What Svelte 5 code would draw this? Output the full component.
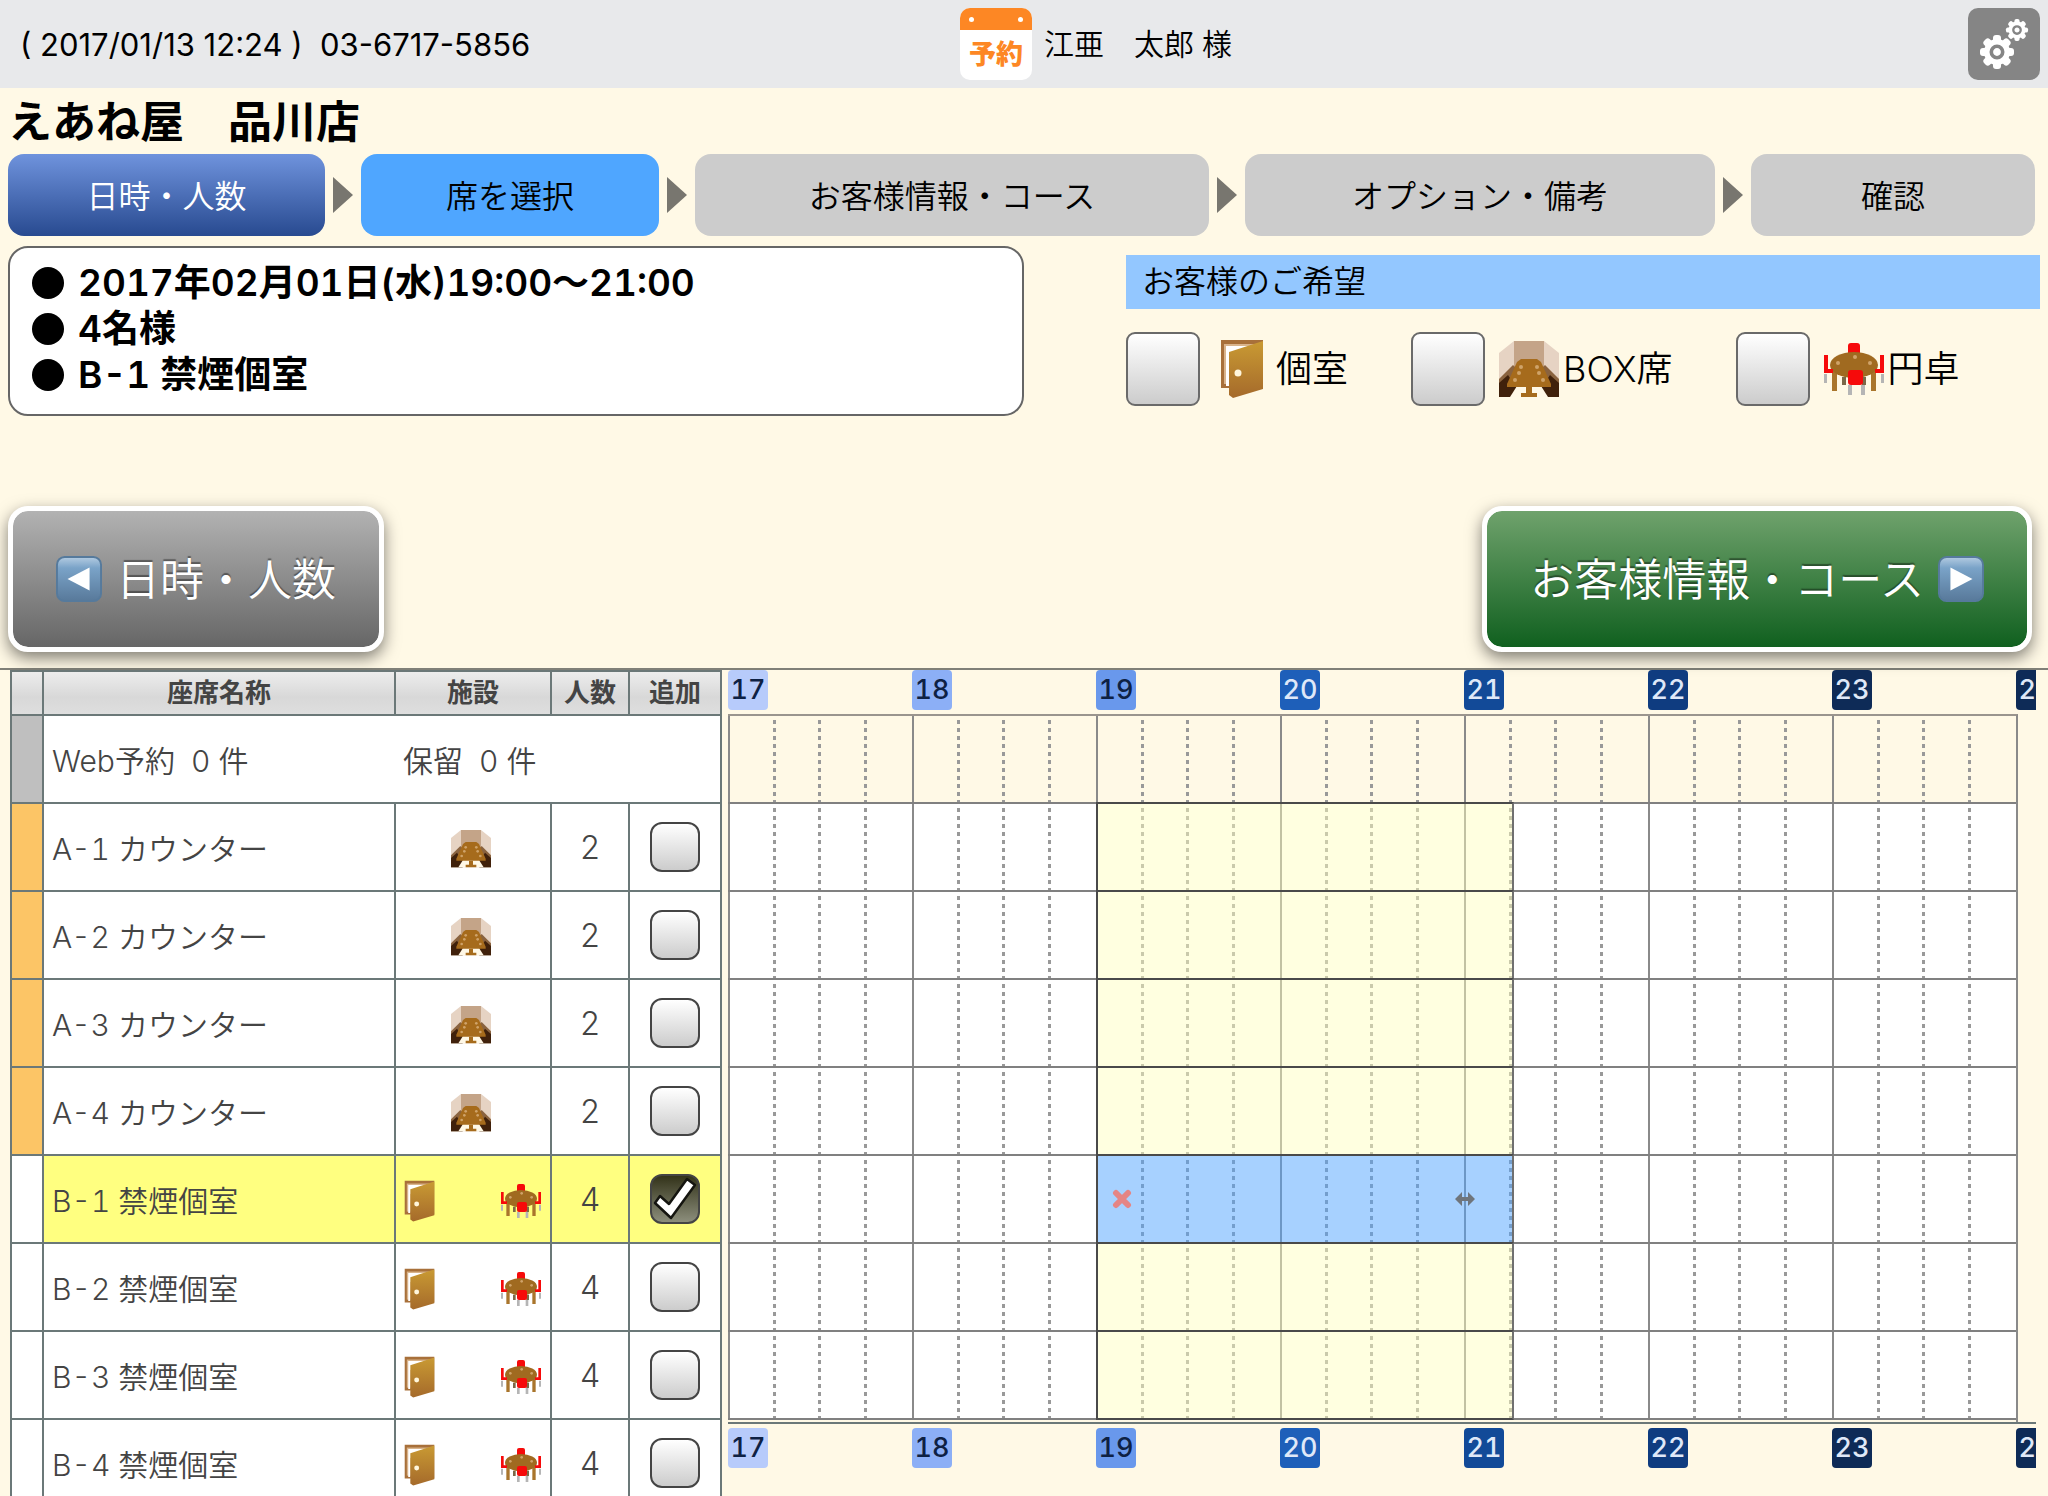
<script>
  const steps = [
    { label: '日時・人数', grow: 317, state: 'done' },
    { label: '席を選択', grow: 298, state: 'current' },
    { label: 'お客様情報・コース', grow: 514, state: 'todo' },
    { label: 'オプション・備考', grow: 470, state: 'todo' },
    { label: '確認', grow: 284, state: 'todo' }
  ];

  const summary = ['2017年02月01日(水)19:00〜21:00', '4名様', 'B-1 禁煙個室'];

  const wishes = [
    { id: 'room', label: '個室', icon: 'door' },
    { id: 'box', label: 'BOX席', icon: 'box' },
    { id: 'round', label: '円卓', icon: 'round' }
  ];

  const seats = [
    ...[1, 2, 3, 4].map((n) => ({
      id: `A-${n}`, name: `A-${n} カウンター`, zone: 'counter', icons: ['box'], size: 2, added: false
    })),
    ...[1, 2, 3, 4].map((n) => ({
      id: `B-${n}`, name: `B-${n} 禁煙個室`, zone: 'private', icons: ['door', 'round'], size: 4, added: n === 1
    }))
  ];

  const plotted = seats.slice(0, 7);
  const hours = [17, 18, 19, 20, 21, 22, 23, 24];
  const slots = hours.slice(0, 7);
  const teeth = [0, 45, 90, 135, 180, 225, 270, 315];

  const startHour = 17;
  const span = { from: 19, to: 21.27 };
  const left = ((span.from - startHour) / slots.length) * 100;
  const width = ((span.to - span.from) / slots.length) * 100;
</script>

{#snippet facility(kind)}
  {#if kind === 'door'}
    <svg class="ico door" viewBox="0 0 44 60" aria-hidden="true">
      <defs>
        <linearGradient id="doorFill" x1="0" y1="0" x2="0" y2="1">
          <stop offset="0" stop-color="#c99a33" />
          <stop offset="1" stop-color="#a56a2b" />
        </linearGradient>
      </defs>
      <path d="M1 1h42v48H1z" fill="#a8703a" />
      <path d="M4 5h36v40H4z" fill="#d9b48c" />
      <path d="M6 7h33v6L9 20v27H6z" fill="#fff" />
      <path d="M9 13L43 2v48L13 59 9 56z" fill="url(#doorFill)" />
      <circle cx="18" cy="34" r="3.5" fill="#fff6dc" />
    </svg>
  {:else if kind === 'box'}
    <svg class="ico box" viewBox="0 0 60 56" aria-hidden="true">
      <path d="M0 12L15 0h30l15 12v44H0z" fill="#e6d3c3" />
      <path d="M15 0h30v27H15z" fill="#c4a488" />
      <path d="M0 38L14 24l4 4v28H0z" fill="#8a633f" />
      <path d="M60 38L46 24l-4 4v28h18z" fill="#8a633f" />
      <path d="M0 42l9-8 8 12v10H0z" fill="#40210b" />
      <path d="M60 42l-9-8-8 12v10h17z" fill="#40210b" />
      <path d="M11 56l7-11h24l7 11z" fill="#fff8e6" />
      <path d="M22 18h16l4 3 10 22v3H8v-3l10-22z" fill="#a66b1c" />
      <path d="M27 46h6v6h5v4H22v-4h5z" fill="#a66b1c" />
      <g fill="#cfa36a">
        <circle cx="22" cy="26" r="2" /><circle cx="38" cy="26" r="2" />
        <circle cx="20" cy="32" r="2" /><circle cx="40" cy="32" r="2" />
        <circle cx="16" cy="39" r="2" /><circle cx="44" cy="39" r="2" />
      </g>
    </svg>
  {:else}
    <svg class="ico round" viewBox="0 0 60 52" aria-hidden="true">
      <path d="M0 31h3v9H0zM57 31h3v9h-3zM24 42h4v10h-4zM37 42h4v10h-4z" fill="#b5b5b5" />
      <path d="M8 28h5v20H8zM47 28h5v20h-5z" fill="#a9752c" />
      <path d="M18 34h4v8h-4zM38 34h4v8h-4z" fill="#7b6848" />
      <rect x="24" y="0" width="12" height="14" rx="3" fill="#f60a0a" />
      <ellipse cx="30" cy="22" rx="24" ry="13" fill="#a06a20" />
      <path d="M0 12h4v14h5v4H0zM60 12h-4v14h-5v4h9z" fill="#f60a0a" />
      <g fill="#cfa36a">
        <circle cx="31" cy="14" r="2" /><circle cx="14" cy="20" r="2" /><circle cx="46" cy="20" r="2" />
      </g>
      <rect x="24" y="27" width="15" height="15" rx="3" fill="#f60a0a" />
    </svg>
  {/if}
{/snippet}

{#snippet gear(cx, cy, scale)}
  <g transform="translate({cx} {cy}) scale({scale})">
    {#each teeth as a}
      <rect x="-4" y="-17" width="8" height="12" rx="3" transform="rotate({a})" fill="#fff" />
    {/each}
    <circle r="13" fill="#fff" />
    <circle r="5.7" fill="none" stroke="#858585" stroke-width="3.6" />
  </g>
{/snippet}

{#snippet arrowBadge(dir)}
  <svg class="badge" viewBox="0 0 48 48" aria-hidden="true">
    <defs>
      <linearGradient id="badge-{dir}" x1="0" y1="0" x2="0" y2="1">
        <stop offset="0" stop-color="#b4cce2" />
        <stop offset="0.25" stop-color="#7aa3c8" />
        <stop offset="1" stop-color="#58799a" />
      </linearGradient>
    </defs>
    <rect x="1" y="1" width="46" height="46" rx="8" fill="url(#badge-{dir})" stroke="#567a9c" stroke-width="2" />
    <path d={dir === 'prev' ? 'M35 12v24L12 24z' : 'M13 12v24l23-12z'} fill="#fff" />
  </svg>
{/snippet}

{#snippet hourScale()}
  <div class="scale">
    {#each hours as h}
      <span class="hour h{h}">{h}</span>
    {/each}
  </div>
{/snippet}

<div class="page">
  <header class="top">
    <p class="call">( 2017/01/13 12:24 )&nbsp; 03-6717-5856</p>
    <div class="guest">
      <span class="calendar"><span class="rings"></span><b>予約</b></span>
      <span class="guest-name">江亜　太郎 様</span>
      <button class="settings" aria-label="設定">
        <svg viewBox="0 0 72 72" aria-hidden="true">
          {@render gear(29, 44, 1)}
          {@render gear(49, 22, 0.65)}
        </svg>
      </button>
    </div>
  </header>

  <h1>えあね屋　品川店</h1>

  <nav class="steps">
    {#each steps as step, i}
      {#if i > 0}<span class="sep"></span>{/if}
      <button class="step {step.state}" style="flex-grow: {step.grow}">{step.label}</button>
    {/each}
  </nav>

  <section class="overview">
    <ul class="summary">
      {#each summary as line}
        <li>{line}</li>
      {/each}
    </ul>
    <div class="wish">
      <h2>お客様のご希望</h2>
      <div class="wish-list">
        {#each wishes as w}
          <div class="wish-item {w.id}">
            <input type="checkbox" id="wish-{w.id}" />
            <label for="wish-{w.id}">{@render facility(w.icon)}<span>{w.label}</span></label>
          </div>
        {/each}
      </div>
    </div>
  </section>

  <div class="actions">
    <button class="go prev">{@render arrowBadge('prev')}<span>日時・人数</span></button>
    <button class="go next"><span>お客様情報・コース</span>{@render arrowBadge('next')}</button>
  </div>

  <main class="board">
    <table>
      <colgroup>
        <col class="c-zone" /><col class="c-name" /><col class="c-fac" /><col class="c-size" /><col class="c-add" />
      </colgroup>
      <thead>
        <tr><th></th><th>座席名称</th><th>施設</th><th>人数</th><th>追加</th></tr>
      </thead>
      <tbody>
        <tr>
          <td class="zone web"></td>
          <td class="name open">Web予約&nbsp; 0 件</td>
          <td class="name" colspan="3">保留&nbsp; 0 件</td>
        </tr>
        {#each seats as seat}
          <tr class:picked={seat.added}>
            <td class="zone {seat.zone}"></td>
            <td class="name">{seat.name}</td>
            <td>
              <div class="facilities" class:single={seat.icons.length === 1}>
                {#each seat.icons as icon}{@render facility(icon)}{/each}
              </div>
            </td>
            <td class="size">{seat.size}</td>
            <td class="add">
              <span class="tick">
                <input type="checkbox" checked={seat.added} aria-label="{seat.name} 追加" />
                <svg viewBox="0 0 50 50" aria-hidden="true">
                  <path d="M5 29l5-7 9 8L37 5l8 6-24 33z" fill="#fff" stroke="#151510" stroke-width="2.5" stroke-linejoin="round" />
                </svg>
              </span>
            </td>
          </tr>
        {/each}
      </tbody>
    </table>

    <div class="chart">
      {@render hourScale()}
      <div class="plot">
        <div class="lane pending">
          {#each slots as s}
            <div class="slot"><i></i><i></i><i></i><i></i></div>
          {/each}
        </div>
        {#each plotted as seat}
          <div class="lane">
            {#each slots as s}
              <div class="slot"><i></i><i></i><i></i><i></i></div>
            {/each}
            <div class="span" class:booked={seat.added} style="left: {left}%; width: {width}%">
              {#if seat.added}
                <button aria-label="削除">
                  <svg viewBox="0 0 20 20"><path d="M4 4l12 12M16 4L4 16" stroke="#e58585" stroke-width="6" stroke-linecap="round" /></svg>
                </button>
                <button aria-label="時間変更">
                  <svg viewBox="0 0 20 20"><path d="M0 10l7-7v5h6V3l7 7-7 7v-5H7v5z" fill="#6f757c" /></svg>
                </button>
              {/if}
            </div>
          </div>
        {/each}
      </div>
      <div class="bottom">{@render hourScale()}</div>
    </div>
  </main>
</div>

<style>
  :global(body) {
    background: #fff9e6;
  }

  .page {
    height: 100vh;
    overflow: hidden;
    background: #fff9e6;
    color: #000;
    font-family: Inter, 'Noto Sans CJK JP', sans-serif;
    font-weight: 350;
    font-size: 32px;
    font-variant-numeric: tabular-nums;
  }

  .page * {
    box-sizing: border-box;
  }

  p, h1, h2, ul {
    margin: 0;
    padding: 0;
    list-style: none;
  }

  button {
    font: inherit;
    border: 0;
    padding: 0;
    white-space: nowrap;
  }

  .top {
    display: grid;
    grid-template-columns: minmax(0, 952fr) minmax(0, 1080fr);
    align-items: center;
    padding: 8px;
    background: #e8e9eb;
  }

  .call {
    padding-left: 12px;
    font-weight: 400;
    font-size: 31px;
    font-variant-numeric: normal;
    white-space: nowrap;
  }

  .guest {
    display: flex;
    align-items: center;
    gap: 12px;
    font-size: 30px;
  }

  .calendar {
    width: 72px;
    height: 72px;
    border-radius: 10px;
    overflow: hidden;
    background: #fff;
    color: #fd8724;
    text-align: center;
  }

  .rings {
    display: flex;
    justify-content: space-between;
    align-items: center;
    height: 22px;
    padding: 0 9px;
    background: #fd8724;
  }

  .rings::before,
  .rings::after {
    content: '';
    width: 5px;
    height: 5px;
    border-radius: 50%;
    background: #fff;
  }

  .calendar b {
    display: block;
    font-size: 27px;
    font-weight: 900;
    line-height: 50px;
  }

  .guest-name {
    flex: 1;
    padding-bottom: 4px;
  }

  .settings {
    width: 72px;
    height: 72px;
    border-radius: 10px;
    background: #858585;
  }

  .settings svg {
    display: block;
  }

  h1 {
    padding-left: 8px;
    font-size: 44px;
    font-weight: 700;
    line-height: 68px;
    height: 66px;
  }

  .steps {
    display: flex;
    align-items: center;
    padding: 0 13px 0 8px;
  }

  .step {
    flex: 1 1 0;
    height: 82px;
    padding-bottom: 2px;
    border-radius: 16px;
    background: #ccc;
    color: #000;
  }

  .step.done {
    background: linear-gradient(#6f93dd, #284a90);
    color: #fff;
  }

  .step.current {
    background: #4fa6ff;
  }

  .sep {
    margin: 0 8px;
    border-left: 20px solid #78766f;
    border-top: 18px solid transparent;
    border-bottom: 18px solid transparent;
  }

  .overview {
    display: grid;
    grid-template-columns: minmax(0, 1016fr) minmax(0, 914fr);
    gap: 102px;
    align-items: start;
    min-height: 270px;
    padding: 10px 8px 0;
  }

  .summary {
    height: 170px;
    padding: 12px 22px;
    border: 2px solid #666;
    border-radius: 20px;
    background: #fff;
    font-size: 37px;
    font-weight: 600;
    line-height: 46px;
  }

  .summary li {
    display: flex;
    align-items: center;
    gap: 14px;
  }

  .summary li::before {
    content: '';
    width: 32px;
    height: 32px;
    border-radius: 50%;
    background: #000;
  }

  .wish {
    padding-top: 9px;
  }

  h2 {
    padding-left: 16px;
    background: #93c7ff;
    font-size: 32px;
    font-weight: inherit;
    line-height: 54px;
  }

  .wish-list {
    display: flex;
    gap: 63px;
    padding-top: 23px;
  }

  .wish-item,
  .wish-item label {
    display: flex;
    align-items: center;
    font-size: 36px;
    white-space: nowrap;
  }

  .wish-item span {
    padding-bottom: 6px;
  }

  .wish-item {
    gap: 14px;
  }

  .wish-item label {
    gap: 4px;
  }

  .wish-item.room {
    gap: 20px;
  }

  .wish-item.room label {
    gap: 12px;
  }

  input {
    appearance: none;
    display: block;
    margin: 0;
    border: 2px solid #6a6a6a;
    border-radius: 9px;
    width: 74px;
    height: 74px;
    background: linear-gradient(#fff, #ccc);
  }

  .ico {
    display: block;
    flex: none;
    width: 60px;
  }

  .ico.door {
    width: 44px;
  }

  .actions {
    display: flex;
    justify-content: space-between;
    align-items: flex-start;
    height: 162px;
    padding: 0 16px 0 8px;
  }

  .go {
    display: flex;
    align-items: center;
    justify-content: center;
    gap: 14px;
    height: 146px;
    padding: 0 43px;
    border: 5px solid #fff;
    border-radius: 20px;
    color: #fff;
    font-size: 44px;
    text-shadow: 0 -2px 1px rgba(0, 0, 0, 0.4);
    box-shadow: 0 6px 16px rgba(0, 0, 0, 0.5);
  }

  .go span {
    padding-bottom: 4px;
  }

  .prev {
    background: linear-gradient(#b2b2b2, #666) padding-box, #fff;
  }

  .next {
    background: linear-gradient(#6fa26c, #10601f) padding-box, #fff;
  }

  .badge {
    width: 46px;
    height: 46px;
  }

  .board {
    display: flex;
    align-items: flex-start;
    gap: 6px;
    padding: 0 12px 0 10px;
    border-top: 2px solid #808078;
  }

  table {
    flex: none;
    width: 712px;
    table-layout: fixed;
    border-collapse: collapse;
    background: #fff;
    color: #444;
    font-size: 30px;
  }

  .c-zone { width: 32px; }
  .c-name { width: 352px; }
  .c-fac { width: 156px; }
  .c-size { width: 78px; }
  .c-add { width: 92px; }

  th,
  td {
    padding: 0;
    border: 2px solid #6b7878;
  }

  th {
    height: 44px;
    background: linear-gradient(#ededed, #d8d8d8 60%, #dedede);
    font-size: 26px;
    font-weight: 700;
    line-height: 36px;
  }

  td {
    height: 88px;
  }

  .zone.web {
    background: #bfbfbf;
  }

  .zone.counter {
    background: #fcc566;
  }

  .name {
    padding-left: 8px;
    white-space: nowrap;
  }

  .name.open {
    border-right: 0;
  }

  .name.open + .name {
    border-left: 0;
  }

  .picked td:not(.zone) {
    background: #ffff80;
  }

  .size {
    text-align: center;
    font-size: 32px;
  }

  .facilities {
    display: flex;
    justify-content: space-between;
    align-items: center;
    padding: 4px 9px 0 8px;
  }

  .facilities.single {
    justify-content: center;
    padding-right: 12px;
  }

  .facilities :global(.ico) {
    width: 40px;
  }

  .facilities :global(.ico.door) {
    width: 31px;
  }

  .tick {
    position: relative;
    display: block;
    width: 50px;
    margin: 0 auto;
  }

  .tick input {
    width: 50px;
    height: 50px;
    border-color: #444;
    border-radius: 12px;
  }

  .tick input:checked {
    background: linear-gradient(#33331a, #8c8e7c);
  }

  .tick svg {
    position: absolute;
    inset: 0;
    display: none;
    pointer-events: none;
  }

  .tick input:checked + svg {
    display: block;
  }

  .chart {
    flex: 1;
    min-width: 0;
    overflow: hidden;
  }

  .scale {
    display: grid;
    grid-template-columns: repeat(7, minmax(0, 1fr)) 20px;
    height: 44px;
  }

  .hour {
    width: 40px;
    height: 40px;
    border-radius: 4px;
    color: #dfe8f8;
    font-size: 27px;
    font-weight: 500;
    line-height: 40px;
    text-align: center;
  }

  .h17 { background: #b7cbfb; color: #0e2144; }
  .h18 { background: #8caff6; color: #0e2144; }
  .h19 { background: #6998ec; color: #0e2144; }
  .h20 { background: #1e5fb9; }
  .h21 { background: #124a98; }
  .h22 { background: #0f3c80; }
  .h23, .h24 { background: #0e2b57; }

  .plot {
    margin-right: 18px;
    padding-bottom: 2px;
    border-top: 2px solid #9a958e;
    border-right: 2px solid #8a8a8a;
  }

  .lane {
    position: relative;
    display: flex;
    height: 88px;
    border-bottom: 2px solid #808080;
    background: #fff;
  }

  .pending {
    background: #fff9e6;
  }

  .slot {
    flex: 1;
    display: grid;
    grid-template-columns: repeat(4, 1fr);
    border-left: 2px solid #8a8a8a;
  }

  .slot i {
    background: repeating-linear-gradient(transparent 0 4px, #999 4px 8px) no-repeat 100% 0 / 3px 100%;
  }

  .slot i:last-child {
    background: none;
  }

  .span {
    position: absolute;
    top: -2px;
    bottom: -2px;
    display: flex;
    align-items: center;
    justify-content: space-between;
    padding: 0 37px 0 14px;
    border: 2px solid #4a4a4a;
    border-right-color: #707070;
    background: rgba(255, 255, 190, 0.48) padding-box;
  }

  .span.booked {
    background: rgba(79, 163, 255, 0.5) padding-box;
  }

  .span button {
    width: 20px;
    height: 20px;
    background: none;
  }

  .span svg {
    display: block;
  }

  .bottom {
    padding-top: 4px;
    border-top: 2px solid #6b7878;
  }
</style>
